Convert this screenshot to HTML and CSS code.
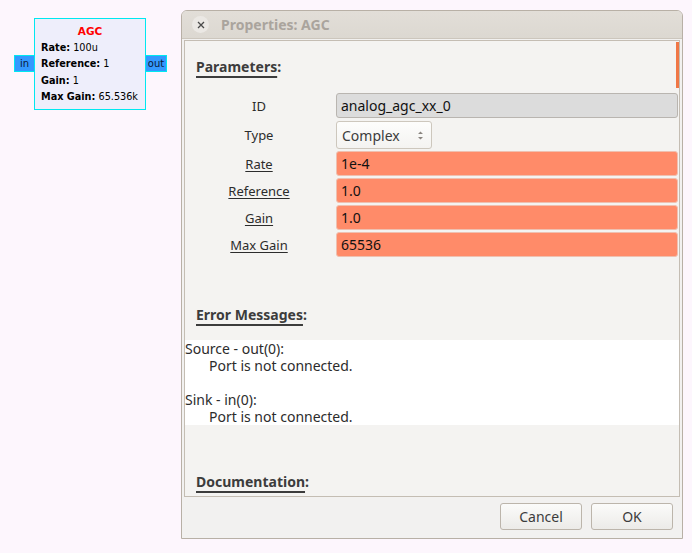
FILE: index.html
```html
<!DOCTYPE html>
<html>
<head>
<meta charset="utf-8">
<link rel="stylesheet" href="styles.css">
</head>
<body>
<div class="desk">
  <div class="block">
    <div class="port port-in">in</div>
    <div class="block-body">
      <div class="block-title">AGC</div>
      <div class="block-line"><b>Rate:</b> 100u</div>
      <div class="block-line"><b>Reference:</b> 1</div>
      <div class="block-line"><b>Gain:</b> 1</div>
      <div class="block-line"><b>Max Gain:</b> 65.536k</div>
    </div>
    <div class="port port-out">out</div>
  </div>

  <div class="dialog">
    <div class="titlebar">
      <span class="close">
        <svg width="8" height="8" viewBox="0 0 8 8"><path d="M1 1L7 7M7 1L1 7" stroke="#4a4a4a" stroke-width="1.3"/></svg>
      </span>
      <span class="title">Properties: AGC</span>
    </div>
    <div class="content">
      <div class="frame">
        <div class="scrollthumb"></div>
        <div class="section-head"><span class="ul">Parameters</span>:</div>
        <div class="params">
          <div class="label">ID</div>
          <div class="field field-id">analog_agc_xx_0</div>
          <div class="label">Type</div>
          <div class="combo-wrap"><div class="combo">Complex
            <svg class="spin" width="7" height="11" viewBox="0 0 7 11"><path d="M1 4L3.5 1.5L6 4Z M1 7L3.5 9.5L6 7Z" fill="#8a8580"/></svg></div></div>
          <div class="label"><span class="u">Rate</span></div>
          <div class="field field-err">1e-4</div>
          <div class="label"><span class="u">Reference</span></div>
          <div class="field field-err">1.0</div>
          <div class="label"><span class="u">Gain</span></div>
          <div class="field field-err">1.0</div>
          <div class="label"><span class="u">Max Gain</span></div>
          <div class="field field-err">65536</div>
        </div>
        <div class="section-head err-head"><span class="ul">Error Messages</span>:</div>
        <div class="errors">
          <div>Source - out(0):</div>
          <div class="indent">Port is not connected.</div>
          <div class="blank"></div>
          <div>Sink - in(0):</div>
          <div class="indent">Port is not connected.</div>
        </div>
        <div class="section-head doc-head"><span class="ul">Documentation</span>:</div>
      </div>
      <div class="buttons">
        <button class="btn">Cancel</button>
        <button class="btn">OK</button>
      </div>
    </div>
  </div>
</div>
</body>
</html>
```
FILE: styles.css
```css
html, body {
  margin: 0;
  padding: 0;
}
body {
  background: #fdf6fd;
  width: 692px;
  height: 553px;
  overflow: hidden;
  font-family: "Noto Sans", "Open Sans", sans-serif;
}
.desk {
  position: relative;
  width: 692px;
  height: 553px;
}

/* flowgraph block */
.block {
  position: absolute;
  left: 14px;
  top: 18px;
  display: flex;
  align-items: flex-start;
  font-family: "DejaVu Sans", sans-serif;
  font-size: 9.7px;
  color: #000;
}
.block-body {
  background: #eeeefb;
  border: 1px solid #00e8f0;
  padding: 0 0 0 6px;
  box-sizing: border-box;
  width: 112px;
  height: 92px;
}
.block-title {
  color: #ff0000;
  font-weight: bold;
  text-align: center;
  margin: 6px 0 2px -6px;
  line-height: 13px;
  font-size: 10.5px;
}
.block-line {
  line-height: 16.3px;
  white-space: nowrap;
}
.port {
  margin-top: 37px;
  height: 17px;
  line-height: 16px;
  background: #3399ff;
  border: 1px solid #00e8f0;
  box-sizing: border-box;
  font-size: 10px;
  color: #0a1a3a;
  text-align: center;
}
.port-in { width: 20px; border-right: none; }
.port-out { width: 21px; border-left: none; }

/* dialog window */
.dialog {
  position: absolute;
  left: 181px;
  top: 10px;
  width: 502px;
  height: 529px;
  box-sizing: border-box;
  border: 1px solid #b8b0a6;
  border-radius: 6px 6px 0 0;
  background: #f2f1f0;
  display: flex;
  flex-direction: column;
  overflow: hidden;
}
.titlebar {
  height: 28px;
  flex: none;
  background: linear-gradient(#e2ded8, #dcd8d1);
  border-bottom: 1px solid #ccc6bd;
  display: flex;
  align-items: center;
  padding-left: 10px;
  box-sizing: border-box;
}
.close {
  width: 17px;
  height: 17px;
  border-radius: 50%;
  background: #ebe8e4;
  display: flex;
  align-items: center;
  justify-content: center;
}
.title {
  margin-left: 12px;
  font-weight: bold;
  font-size: 14px;
  color: #aaa49d;
}
.content {
  flex: 1;
  display: flex;
  flex-direction: column;
  padding: 1px 2px 0 2px;
}
.frame {
  position: relative;
  height: 457px;
  box-sizing: border-box;
  border: 1px solid #c4bdb3;
  background: #f4f3f1;
  color: #3c3c3c;
  font-size: 14px;
  overflow: hidden;
}
.scrollthumb {
  position: absolute;
  right: 0;
  top: 1px;
  width: 3px;
  height: 46px;
  background: #f07746;
}
.section-head {
  font-weight: bold;
  font-size: 14px;
  padding-left: 11px;
  margin-top: 16px;
  line-height: 20px;
}
.ul {
  text-decoration: underline;
  text-decoration-thickness: 2px;
  text-underline-offset: 4px;
}
.params {
  display: grid;
  grid-template-columns: 148px 1fr;
  column-gap: 3px;
  margin-top: 16px;
  padding-right: 1px;
  row-gap: 2px;
}
.label {
  text-align: center;
  font-size: 13px;
  align-self: center;
  color: #2c2c2c;
}
.u {
  text-decoration: underline;
  text-underline-offset: 2px;
}
.field {
  height: 25px;
  box-sizing: border-box;
  border: 1px solid #c9c2b8;
  border-radius: 3px;
  padding-left: 4px;
  line-height: 23px;
  font-size: 14px;
  color: #111;
}
.field-id {
  background: #dcdcdc;
  border-color: #b9b5b0;
}
.field-err {
  background: #ff8b69;
  border-color: #efc0b0;
}
.combo-wrap {
  padding: 1px 0 0 0;
}
.combo {
  width: 96px;
  height: 28px;
  box-sizing: border-box;
  border: 1px solid #cdc7bd;
  border-radius: 3px;
  background: linear-gradient(#fdfdfc, #f4f3f1);
  display: flex;
  align-items: center;
  padding-left: 5px;
  font-size: 14px;
  color: #3c3c3c;
  position: relative;
}
.spin {
  position: absolute;
  right: 7px;
  top: 8px;
}
.err-head {
  margin-top: 48px;
}
.errors {
  margin-top: 15px;
  background: #ffffff;
  font-size: 14px;
  line-height: 17px;
  color: #2c2c2c;
  height: 85px;
}
.errors .indent { padding-left: 24px; }
.errors .blank { height: 17px; }
.doc-head {
  margin-top: 47px;
}
.buttons {
  display: flex;
  justify-content: flex-end;
  gap: 9px;
  padding: 6px 7px 0 0;
}
.btn {
  width: 82px;
  height: 27px;
  box-sizing: border-box;
  border: 1px solid #bcb5ab;
  border-radius: 3px;
  background: linear-gradient(#fbfbfa, #ecebe8);
  font-family: "Noto Sans", "Open Sans", sans-serif;
  font-size: 14px;
  color: #3c3c3c;
  padding: 0;
}
```
